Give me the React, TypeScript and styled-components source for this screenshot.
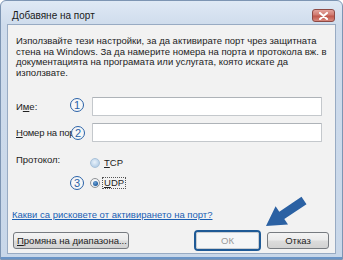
import React from "react";
import styled, { createGlobalStyle } from "styled-components";

const Global = createGlobalStyle`
  html, body { margin: 0; padding: 0; background: #ffffff; }
  body { font-family: "Liberation Sans", Arial, sans-serif; }
  * { box-sizing: border-box; }
`;

const Window = styled.div`
  position: relative;
  width: 343px;
  height: 260px;
  display: flex;
  flex-direction: column;
  padding: 0 6px 5px 6px;
  border: 1px solid #7d95b3;
  border-radius: 6px 6px 0 0;
  background: linear-gradient(180deg, #dfe9f5 0px, #cfdcec 24px, #c8d7e9 100%);
  overflow: hidden;
  &::after {
    content: "";
    position: absolute;
    left: 0;
    right: 0;
    bottom: 0;
    height: 2px;
    background: #6a94c6;
  }
`;

const TitleBar = styled.div`
  height: 23px;
  display: flex;
  align-items: center;
  justify-content: space-between;
  padding: 0 1px 0 5px;
`;

const Title = styled.span`
  font-size: 10px;
  color: #1a1a1a;
  margin-top: 5px;
`;

const CloseButton = styled.div`
  width: 23px;
  height: 13px;
  margin-top: 6px;
  border: 1px solid #8d4a45;
  border-radius: 3px;
  background: linear-gradient(180deg, #e4a39c 0%, #d07a70 45%, #c0574b 55%, #d8897e 100%);
  display: flex;
  align-items: center;
  justify-content: center;
`;

const Client = styled.div`
  position: relative;
  flex: 1;
  background: #f2f2f2;
  border: 1px solid #98abc3;
  padding: 11px 6px 0 5px;
  display: flex;
  flex-direction: column;
  font-size: 9.5px;
  color: #222222;
`;

const Intro = styled.p`
  margin: 0 0 0 3px;
  line-height: 10.5px;
  white-space: nowrap;
`;

const FieldRow = styled.div<{ $top: number }>`
  display: flex;
  align-items: center;
  margin: ${(p) => p.$top}px 7px 0 3px;
  height: 19px;
`;

const Label = styled.span<{ $tight?: boolean }>`
  width: 76px;
  flex: none;
  white-space: nowrap;
  letter-spacing: ${(p) => (p.$tight ? "-0.2px" : "normal")};
`;

const Input = styled.div`
  flex: 1;
  height: 19px;
  background: #ffffff;
  border: 1px solid #c4c8cc;
  border-top-color: #aeb3b8;
  border-radius: 1px;
`;

const ProtocolBlock = styled.div`
  display: grid;
  grid-template-columns: 74px auto;
  grid-auto-rows: 12px;
  row-gap: 8px;
  margin: 15px 0 0 3px;
`;

const ProtocolLabel = styled.span`
  line-height: 10px;
  margin-top: -2px;
`;

const RadioRow = styled.div`
  grid-column: 2;
  display: flex;
  align-items: center;
  gap: 3px;
`;

const RadioCircle = styled.span<{ $checked?: boolean }>`
  width: 10px;
  height: 10px;
  border-radius: 50%;
  flex: none;
  display: flex;
  align-items: center;
  justify-content: center;
  border: 1px solid ${(p) => (p.$checked ? "#8f9397" : "#a9c2da")};
  background: ${(p) =>
    p.$checked
      ? "radial-gradient(circle at 50% 40%, #ffffff 0%, #e3e6e9 100%)"
      : "radial-gradient(circle at 45% 40%, #e9f2fb 0%, #b9d1e8 70%, #a6c2de 100%)"};
  &::after {
    content: "";
    display: ${(p) => (p.$checked ? "block" : "none")};
    width: 5px;
    height: 5px;
    border-radius: 50%;
    background: radial-gradient(circle at 40% 35%, #6fa3d8 0%, #1f5d9e 70%, #174a80 100%);
  }
`;

const RadioText = styled.span<{ $focused?: boolean }>`
  line-height: 10px;
  padding: 0 1px;
  outline: ${(p) => (p.$focused ? "1px dotted #555" : "none")};
`;

const Link = styled.a`
  margin: 21px 0 0 -1px;
  color: #1a5fb4;
  text-decoration: underline;
  line-height: 10px;
  white-space: nowrap;
`;

const ButtonRow = styled.div`
  display: flex;
  align-items: center;
  margin-top: 10px;
`;

const Button = styled.div<{ $width: number }>`
  width: ${(p) => p.$width}px;
  height: 17px;
  display: flex;
  align-items: center;
  justify-content: center;
  border: 1px solid #777b80;
  border-radius: 3px;
  background: linear-gradient(180deg, #f4f4f4 0%, #ebebeb 48%, #dcdcdc 52%, #d2d2d2 100%);
  color: #1e1e1e;
  white-space: nowrap;
`;

const LeftButton = styled(Button)`
  justify-content: flex-start;
  padding-left: 3px;
`;

const Spacer = styled.div`
  flex: 1;
`;

const FocusFrame = styled.div`
  width: 67px;
  height: 21px;
  border: 2px solid #1f5a96;
  border-radius: 4px;
  margin-right: 6px;
  display: flex;
`;

const DisabledButton = styled.div`
  flex: 1;
  display: flex;
  align-items: center;
  justify-content: center;
  border: 1px solid #c8cdd2;
  border-radius: 2px;
  background: #f5f6f7;
  color: #9a9a9a;
`;

const Mnemonic = styled.span`
  text-decoration: underline;
`;

const Callout = styled.span<{ $x: number; $y: number }>`
  position: absolute;
  left: ${(p) => p.$x}px;
  top: ${(p) => p.$y}px;
  width: 14px;
  height: 14px;
  border-radius: 50%;
  border: 1.2px solid #2a62a8;
  background: #f7f7f7;
  color: #2a62a8;
  font-size: 11px;
  line-height: 12px;
  text-align: center;
  font-family: "Liberation Sans", Arial, sans-serif;
`;

const ArrowLayer = styled.svg`
  position: absolute;
  left: 0;
  top: 0;
  pointer-events: none;
`;

export default function App() {
  return (
    <>
      <Global />
      <Window>
        <TitleBar>
          <Title>Добавяне на порт</Title>
          <CloseButton>
            <svg width="11" height="8" viewBox="0 0 11 8">
              <path d="M2 1 L9 7 M9 1 L2 7" stroke="#ffffff" strokeWidth="2" strokeLinecap="round" />
            </svg>
          </CloseButton>
        </TitleBar>
        <Client>
          <Intro>
            Използвайте тези настройки, за да активирате порт чрез защитната
            <br />
            стена на Windows. За да намерите номера на порта и протокола вж. в
            <br />
            документацията на програмата или услугата, която искате да
            <br />
            използвате.
          </Intro>
          <FieldRow $top={19}>
            <Label>
              И<Mnemonic>м</Mnemonic>е:
            </Label>
            <Input />
          </FieldRow>
          <FieldRow $top={7}>
            <Label $tight>
              <Mnemonic>Н</Mnemonic>омер на пор
            </Label>
            <Input />
          </FieldRow>
          <ProtocolBlock>
            <ProtocolLabel>Протокол:</ProtocolLabel>
            <RadioRow>
              <RadioCircle />
              <RadioText>
                <Mnemonic>T</Mnemonic>CP
              </RadioText>
            </RadioRow>
            <RadioRow>
              <RadioCircle $checked />
              <RadioText $focused>
                <Mnemonic>U</Mnemonic>DP
              </RadioText>
            </RadioRow>
          </ProtocolBlock>
          <Link>Какви са рисковете от активирането на порт?</Link>
          <ButtonRow>
            <LeftButton $width={116}>
              <Mnemonic>П</Mnemonic>ромяна на диапазона...
            </LeftButton>
            <Spacer />
            <FocusFrame>
              <DisabledButton>ОК</DisabledButton>
            </FocusFrame>
            <Button $width={62}>Отказ</Button>
          </ButtonRow>
          <Callout $x={62} $y={73}>1</Callout>
          <Callout $x={63} $y={101}>2</Callout>
          <Callout $x={62} $y={151}>3</Callout>
        </Client>
        <ArrowLayer width="343" height="260" viewBox="0 0 343 260">
          <polygon
            points="265,225 287,223.5 283.3,218.1 305.5,203.2 300.5,195.8 278.3,210.7 274.6,205.3"
            fill="#2b61a3"
          />
        </ArrowLayer>
      </Window>
    </>
  );
}
